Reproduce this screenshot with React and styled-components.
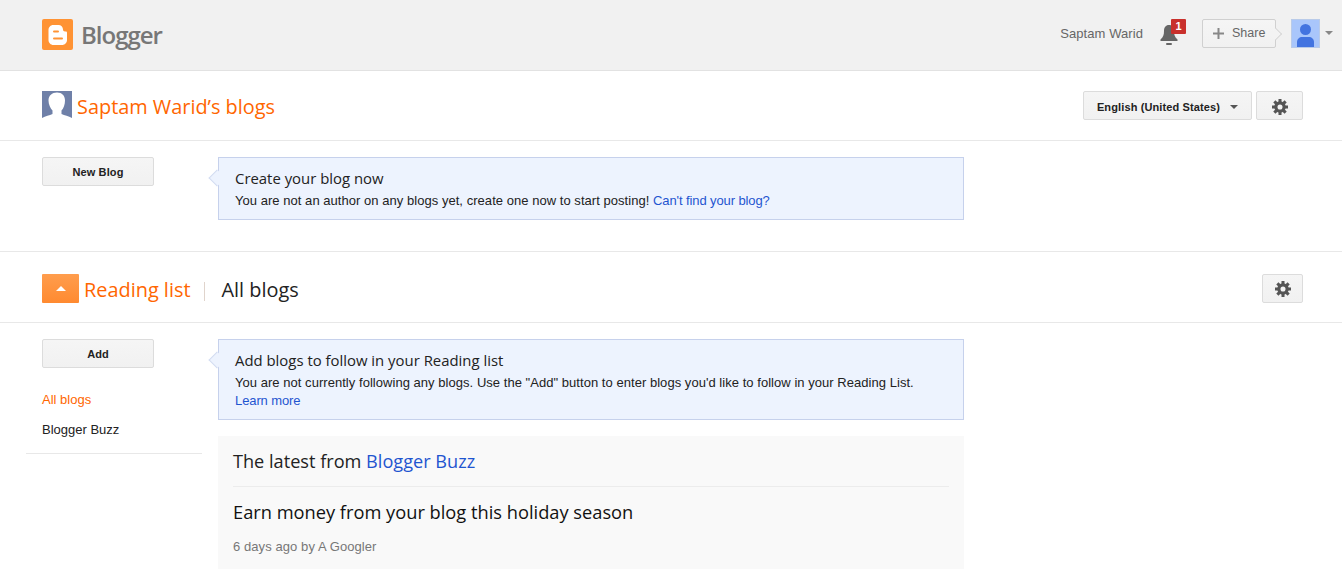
import React from 'react'
import styled, { createGlobalStyle } from 'styled-components'

const Global = createGlobalStyle`
  html, body { margin: 0; padding: 0; background: #fff; }
  body { font-family: "Liberation Sans", Arial, sans-serif; font-size: 13px; color: #222; overflow: hidden; }
  a { color: #1f55d0; text-decoration: none; }
`

const Page = styled.div`
  width: 1342px;
  height: 569px;
  overflow: hidden;
`

const TopBar = styled.header`
  display: flex;
  align-items: center;
  justify-content: space-between;
  height: 70px;
  padding: 0 9px 0 42px;
  background: #f1f1f1;
  border-bottom: 1px solid #e2e2e2;
`

const Brand = styled.div`
  display: flex;
  align-items: center;
  gap: 8px;
  margin-top: -1px;
`

const BrandName = styled.span`
  font-family: "Open Sans", sans-serif;
  font-size: 24px;
  font-weight: 600;
  letter-spacing: -1px;
  color: #777;
`

const UserArea = styled.div`
  display: flex;
  align-items: center;
  padding-bottom: 4px;
`

const UserName = styled.span`
  font-size: 13px;
  letter-spacing: 0.08px;
  color: #666;
  margin-right: 17px;
`

const Bell = styled.div`
  position: relative;
  width: 18px;
  height: 20px;
  margin-right: 24px;
  margin-top: 4px;
`

const BellBadge = styled.span`
  position: absolute;
  top: -6px;
  left: 11px;
  width: 15px;
  height: 15px;
  background: #c9302c;
  border-radius: 1px;
  color: #fff;
  font-size: 11px;
  font-weight: bold;
  line-height: 15px;
  text-align: center;
`

const ShareButton = styled.div`
  position: relative;
  display: flex;
  align-items: center;
  box-sizing: border-box;
  width: 74px;
  height: 29px;
  padding-left: 10px;
  gap: 8px;
  background: linear-gradient(#f5f5f5, #f1f1f1);
  border: 1px solid #d0d0d0;
  border-radius: 2px;
  font-size: 12.5px;
  color: #666;
  margin-right: 15px;
  &::after {
    content: '';
    position: absolute;
    right: -6px;
    top: 9px;
    width: 9px;
    height: 9px;
    background: #f3f3f3;
    border-top: 1px solid #d0d0d0;
    border-right: 1px solid #d0d0d0;
    transform: rotate(45deg) scale(0.85);
  }
`

const Avatar = styled.div`
  box-sizing: border-box;
  width: 29px;
  height: 29px;
  background: #a9c6fb;
  border: 1px solid #b9cbe9;
  display: flex;
  align-items: flex-end;
  justify-content: center;
`

const Caret = styled.span`
  display: inline-block;
  width: 0;
  height: 0;
  border-left: 4px solid transparent;
  border-right: 4px solid transparent;
  border-top: 4px solid ${p => p.$color || '#888'};
  margin-left: ${p => p.$gap || 5}px;
`

const TitleRow = styled.div`
  display: flex;
  align-items: center;
  justify-content: space-between;
  height: 69px;
  padding: 0 39px 0 42px;
  border-bottom: 1px solid #e8e8e8;
`

const TitleLeft = styled.div`
  display: flex;
  align-items: center;
`

const Heading = styled.h2`
  margin: 2px 0 0;
  font-family: "Open Sans", sans-serif;
  font-size: 19.9px;
  font-weight: 400;
  color: ${p => p.$color || '#f60'};
`

const TitleActions = styled.div`
  display: flex;
  gap: 4px;
`

const Button = styled.button`
  display: flex;
  align-items: center;
  justify-content: center;
  box-sizing: border-box;
  width: ${p => p.$width}px;
  height: 29px;
  padding: ${p => p.$drop || 0}px 0 0;
  background: linear-gradient(#f5f5f5, #f1f1f1);
  border: 1px solid #dcdcdc;
  border-radius: 2px;
  font-family: "Liberation Sans", Arial, sans-serif;
  font-size: 11px;
  font-weight: bold;
  letter-spacing: 0.12px;
  color: #222;
`

const Section = styled.section`
  display: grid;
  grid-template-columns: 112px 746px;
  column-gap: 64px;
  padding: 16px 0 0 42px;
`

const NewBlogSection = styled(Section)`
  height: 111px;
  box-sizing: border-box;
  border-bottom: 1px solid #e8e8e8;
`

const Notice = styled.div`
  position: relative;
  box-sizing: border-box;
  padding: 10px 16px 0;
  height: ${p => p.$height}px;
  background: #edf3fe;
  border: 1px solid #c6d1ec;
  &::before {
    content: '';
    position: absolute;
    left: -8px;
    top: 14px;
    width: 11px;
    height: 11px;
    background: #edf3fe;
    border-left: 1px solid #d3dcf1;
    border-bottom: 1px solid #d3dcf1;
    transform: rotate(45deg);
  }
`

const NoticeTitle = styled.div`
  position: relative;
  font-family: "Open Sans", sans-serif;
  font-size: 14.9px;
  line-height: 20px;
  color: #222;
  margin-bottom: 4px;
`

const NoticeText = styled.div`
  position: relative;
  font-size: 13px;
  line-height: 18px;
  letter-spacing: 0.04px;
  color: #222;
  a { letter-spacing: -0.1px; }
`

const ReadingRow = styled(TitleRow)`
  height: 71px;
  box-sizing: border-box;
  padding-top: 3px;
`

const Toggle = styled.div`
  display: flex;
  align-items: center;
  justify-content: center;
  width: 37px;
  height: 29px;
  margin-right: 5px;
  background: linear-gradient(#ff9d4d, #ff8a30);
  border-radius: 1px;
  &::after {
    content: '';
    width: 0;
    height: 0;
    border-left: 5px solid transparent;
    border-right: 5px solid transparent;
    border-bottom: 5px solid #fff;
  }
`

const Divider = styled.span`
  width: 1px;
  height: 19px;
  background: #e0d4cc;
  margin: 5px 16px 0 14px;
`

const SideColumn = styled.div`
  display: flex;
  flex-direction: column;
`

const SideList = styled.nav`
  margin: 17px -18px 0 -16px;
  padding: 0 0 8px 16px;
  border-bottom: 1px solid #e8e8e8;
  width: 160px;
`

const SideItem = styled.div`
  height: 30px;
  line-height: 30px;
  font-size: 13px;
  color: ${p => (p.$active ? '#f60' : '#222')};
`

const MainColumn = styled.div`
  display: flex;
  flex-direction: column;
  gap: 16px;
`

const BuzzCard = styled.article`
  height: 140px;
  padding: 0 15px;
  background: #f9f9f9;
`

const BuzzHead = styled.div`
  height: 50px;
  line-height: 50px;
  font-family: "Open Sans", sans-serif;
  font-size: 18.15px;
  color: #222;
  border-bottom: 1px solid #ececec;
`

const BuzzTitle = styled.div`
  margin-top: 12px;
  font-family: "Open Sans", sans-serif;
  font-size: 18.25px;
  line-height: 25px;
  color: #111;
`

const BuzzMeta = styled.div`
  margin-top: 15px;
  font-size: 13px;
  letter-spacing: 0.08px;
  color: #777;
`

const LogoIcon = () => (
  <svg width="31" height="31" viewBox="0 0 31 31">
    <rect width="31" height="31" rx="2" fill="#ff9334" />
    <path d="M11 6h5.500c2.500 0 4.500 2 4.500 4.500 0 1.200.8 2 2 2h.8c.7 0 1.200.5 1.200 1.200V21c0 2.800-2.200 5-5 5h-8.500c-2.800 0-5-2.200-5-5V11c0-2.800 2.200-5 4.500-5z" fill="#fff" />
    <rect x="11" y="11.500" width="6" height="2" rx="1" fill="#ff9334" />
    <rect x="11" y="18.500" width="10" height="2" rx="1" fill="#ff9334" />
  </svg>
)

const BellIcon = () => (
  <svg width="18" height="20" viewBox="0 0 18 20" style={{ display: 'block' }}>
    <path d="M9 0c3.300 0 5 2.500 5 6 0 4 .8 6 3.500 8.500V16H.5v-1.500C3.200 12 4 10 4 6c0-3.500 1.700-6 5-6z" fill="#666" />
    <rect x="6" y="18" width="6" height="2" rx="1" fill="#666" />
  </svg>
)

const PlusIcon = () => (
  <svg width="11" height="11" viewBox="0 0 11 11">
    <path d="M4.500 0h2v4.500H11v2H6.500V11h-2V6.500H0v-2h4.500z" fill="#888" />
  </svg>
)

const PersonIcon = () => (
  <svg width="17" height="23" viewBox="0 0 17 23" style={{ display: 'block' }}>
    <circle cx="8.500" cy="5.500" r="5.500" fill="#4374e0" />
    <path d="M0 23v-5c0-3 2.500-5 5-5h7c2.500 0 5 2 5 5v5z" fill="#4374e0" />
  </svg>
)

const ProfileIcon = () => (
  <svg width="30" height="30" viewBox="0 0 30 30" style={{ marginRight: 5 }}>
    <rect width="30" height="30" fill="#6f80a8" />
    <path d="M15 1.500c5 0 8 3 8 8 0 4-1.500 8-3.500 10V23c3 1.500 7 2 10.500 4v3H0v-3c3.500-2 7.500-2.500 10.500-4v-3.500c-2-2-4-6-4-10 0-5 3.500-8 8.500-8z" fill="#fff" />
  </svg>
)

const GEAR_TEETH = [0, 45, 90, 135, 180, 225, 270, 315]

const GearIcon = () => (
  <svg width="16" height="16" viewBox="0 0 17 17">
    <circle cx="8.500" cy="8.500" r="4.400" fill="none" stroke="#555" strokeWidth="3.400" />
    {GEAR_TEETH.map(a => (
      <rect key={a} x="6.900" y="0" width="3.200" height="3.500" fill="#555" transform={`rotate(${a} 8.500 8.500)`} />
    ))}
  </svg>
)

export default function App() {
  return (
    <Page>
      <Global />
      <TopBar>
        <Brand>
          <LogoIcon />
          <BrandName>Blogger</BrandName>
        </Brand>
        <UserArea>
          <UserName>Saptam Warid</UserName>
          <Bell>
            <BellIcon />
            <BellBadge>1</BellBadge>
          </Bell>
          <ShareButton>
            <PlusIcon />
            Share
          </ShareButton>
          <Avatar>
            <PersonIcon />
          </Avatar>
          <Caret $gap={5} />
        </UserArea>
      </TopBar>

      <TitleRow>
        <TitleLeft>
          <ProfileIcon />
          <Heading>Saptam Warid’s blogs</Heading>
        </TitleLeft>
        <TitleActions>
          <Button $width={169} $drop={2}>
            English (United States)
            <Caret $color="#555" $gap={10} />
          </Button>
          <Button $width={47} $drop={3}>
            <GearIcon />
          </Button>
        </TitleActions>
      </TitleRow>

      <NewBlogSection>
        <div>
          <Button $width={112}>New Blog</Button>
        </div>
        <Notice $height={63}>
          <NoticeTitle>Create your blog now</NoticeTitle>
          <NoticeText>
            You are not an author on any blogs yet, create one now to start posting!{' '}
            <a href="#">Can't find your blog?</a>
          </NoticeText>
        </Notice>
      </NewBlogSection>

      <ReadingRow>
        <TitleLeft>
          <Toggle />
          <Heading>Reading list</Heading>
          <Divider />
          <Heading $color="#222">All blogs</Heading>
        </TitleLeft>
        <Button $width={41}>
          <GearIcon />
        </Button>
      </ReadingRow>

      <Section>
        <SideColumn>
          <Button $width={112}>Add</Button>
          <SideList>
            <SideItem $active>All blogs</SideItem>
            <SideItem>Blogger Buzz</SideItem>
          </SideList>
        </SideColumn>
        <MainColumn>
          <Notice $height={81}>
            <NoticeTitle>Add blogs to follow in your Reading list</NoticeTitle>
            <NoticeText>
              You are not currently following any blogs. Use the "Add" button to enter blogs you'd like to follow in your Reading List.
              <br />
              <a href="#">Learn more</a>
            </NoticeText>
          </Notice>
          <BuzzCard>
            <BuzzHead>
              The latest from <a href="#">Blogger Buzz</a>
            </BuzzHead>
            <BuzzTitle>Earn money from your blog this holiday season</BuzzTitle>
            <BuzzMeta>6 days ago by A Googler</BuzzMeta>
          </BuzzCard>
        </MainColumn>
      </Section>
    </Page>
  )
}
